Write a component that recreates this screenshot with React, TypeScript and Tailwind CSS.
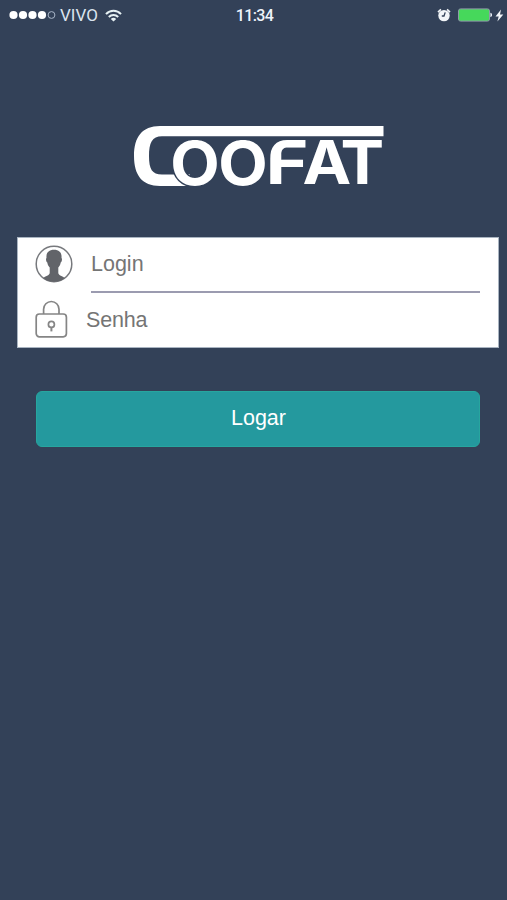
const StatusBar = () => (
  <header className="grid h-[30px] grid-cols-3 items-center pl-[9px] pr-[3px] font-['Roboto',sans-serif] text-[#eef3fa]">
    <div className="flex items-center">
      <svg width="47" height="10" viewBox="0 0 47 10" aria-hidden="true">
        <g fill="#fff">
          <circle cx="4.5" cy="5" r="4.1" />
          <circle cx="14" cy="5" r="4.1" />
          <circle cx="23.5" cy="5" r="4.1" />
          <circle cx="33" cy="5" r="4.1" />
        </g>
        <circle cx="42.5" cy="5" r="3.4" fill="none" stroke="#a9b6c8" />
      </svg>
      <span className="ml-[4px] w-[38px] pt-px text-[17px] leading-none text-[#dbe4ef]">VIVO</span>
      <svg className="ml-[7px]" width="17" height="13" viewBox="0 0 17 13" fill="none" stroke="#e6f1f3" strokeWidth="2" aria-hidden="true">
        <path d="M1 5.1C5.2.6 11.8.6 16 5.1" />
        <path d="M3.8 8C6.5 5.3 10.5 5.3 13.2 8" />
        <path d="M8.5 12.6 5.8 9.9C7.4 8.5 9.6 8.5 11.2 9.9Z" fill="#e6f1f3" stroke="none" />
      </svg>
    </div>
    <span className="pr-[4px] pt-px text-center text-[16px] font-medium leading-none tracking-[-0.6px]">11:34</span>
    <div className="flex items-center justify-end">
      <svg width="14" height="14" viewBox="0 0 14 14" aria-hidden="true">
        <circle cx="7" cy="7.6" r="5.7" fill="#f2f5f8" />
        <path d="M1 4.1 3.9 1.3M13 4.1 10.1 1.3" stroke="#f2f5f8" strokeWidth="1.6" />
        <path d="M8.2 4.4 7 8H4.8" fill="none" stroke="#334158" strokeWidth="1.3" />
      </svg>
      <svg className="ml-[7px]" width="35" height="14" viewBox="0 0 35 14" aria-hidden="true">
        <rect x=".5" y=".9" width="31" height="12.2" rx="2" fill="#46d85b" stroke="#8e9ca8" />
        <path d="M32.4 4.8c2.2.4 2.2 4 0 4.4Z" fill="#eef3fa" />
      </svg>
      <svg className="ml-[2px]" width="9" height="13" viewBox="0 0 9 13" fill="#f2f5f8" aria-hidden="true">
        <path d="M6 .5.5 7.4h3.2L2.4 12.5 8.3 5.4H5Z" />
      </svg>
    </div>
  </header>
);

const Logo = () => (
  <svg
    className="ml-[134px] mt-[95px] block overflow-visible"
    width="251"
    height="62"
    viewBox="0 0 251 62"
    fontFamily="Inter, sans-serif"
    fontWeight="700"
    fontSize="60.5"
    fill="#fff"
    aria-label="COOFAT"
  >
    {/* swoosh that runs over the whole name */}
    <path d="M249.5 1H26C8 1 0 12 0 31S8 61 26 61H56V49.5H28C18 49.5 15 44 15 31S18 11.2 28 11.2H249.5Z" />
    <text x="36.2" y="59.7" textLength="49.5" lengthAdjust="spacingAndGlyphs" stroke="#334158" strokeWidth="3" paintOrder="stroke">O</text>
    <text x="84.2" y="59.7" textLength="49.5" lengthAdjust="spacingAndGlyphs">O</text>
    <text x="131.5" y="59.2" textLength="43" lengthAdjust="spacingAndGlyphs">F</text>
    {/* rounds off the upper left corner */}
    <path d="M134 13V34H136C136 22 142 15 153 15V13Z" fill="#334158" />
    <path d="M144 21H155C149 23 146.8 25 146.8 31H144Z" />
    <text transform="translate(168.4 59.2) scale(1.08 1)" x="0 35.2" y="0">AT</text>
  </svg>
);

const UserIcon = () => (
  <svg width="38" height="38" viewBox="0 0 38 38" aria-hidden="true">
    <circle cx="19" cy="19" r="17.8" fill="#fff" stroke="#77797d" strokeWidth="1.5" />
    <path
      d="M19 4.8c-5.4 0-8 3.2-7.5 8.2-.9.3-.5 3.9.8 4.6.4 2.4 1.3 3.9 2.4 5v5.2c0 2.8-4.6 3.6-6.6 5.2a17.3 17.3 0 0 0 21.8 0c-2-1.6-6.6-2.4-6.6-5.2v-5.2c1.1-1.1 2-2.6 2.4-5 1.3-.7 1.7-4.3.8-4.6.5-5-2.1-8.2-7.5-8.2Z"
      fill="#626469"
    />
  </svg>
);

const LockIcon = () => (
  <svg width="33" height="39" viewBox="0 0 33 39" fill="none" stroke="#858585" strokeWidth="1.7" aria-hidden="true">
    <rect x="1.2" y="14" width="30.2" height="22.8" rx="3.2" />
    <path d="M8.6 14V9.2a7.7 7.7 0 0 1 15.4 0V14" />
    <circle cx="16.4" cy="24.4" r="3" />
    <path d="M16.4 27v4.4" strokeWidth="2" />
  </svg>
);

const fieldClass =
  'min-w-0 flex-1 bg-transparent text-[21.5px] leading-none text-[#757575] outline-none placeholder:text-[#757575]';

const App = () => (
  <main className="flex h-[900px] w-[507px] flex-col overflow-hidden bg-[#334158] font-['Liberation_Sans',Arial,sans-serif]">
    <StatusBar />
    <Logo />
    <form>
      <div className="ml-[17px] mt-[50px] h-[111px] w-[482px] border border-[#a9b4c1] bg-white pl-[17px]">
        <div className="flex h-[55px]">
          <div className="mt-[7px] w-[56px]">
            <UserIcon />
          </div>
          <div className="flex w-[389px] border-b-2 border-[#9b9bb0]">
            <input className={fieldClass} placeholder="Login" aria-label="Login" />
          </div>
        </div>
        <div className="flex h-[54px]">
          <div className="w-[51px] pt-[7px]">
            <LockIcon />
          </div>
          <input
            className={`${fieldClass} tracking-[-0.2px]`}
            type="password"
            placeholder="Senha"
            aria-label="Senha"
          />
        </div>
      </div>
      <button
        type="button"
        className="ml-[36px] mt-[43px] flex h-[56px] w-[444px] items-center justify-center rounded-[6px] border border-[#27a69f] bg-[#24999e] pl-px text-[21.5px] leading-none text-white"
      >
        Logar
      </button>
    </form>
  </main>
);

export default App;
